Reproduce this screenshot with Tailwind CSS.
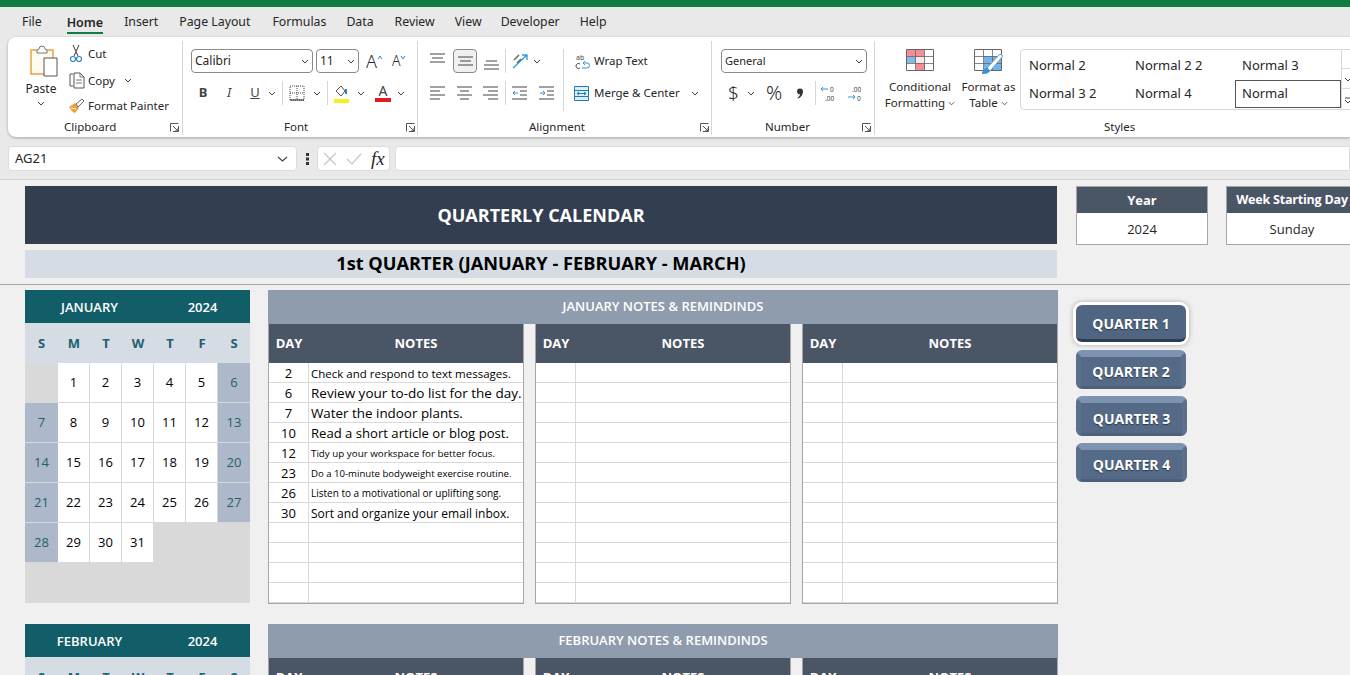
<!DOCTYPE html>
<html lang="en">
<head>
<meta charset="UTF-8">
<title>Quarterly Calendar</title>
<script src="https://cdn.jsdelivr.net/npm/@tailwindcss/browser@4"></script>
</head>
<body class="w-[1350px] h-[675px] overflow-hidden bg-[#f0f0f0] font-['Noto_Sans','Open_Sans',sans-serif] text-[#262626]">

<!-- title strip and tabs -->
<div class="h-[7px] bg-[#107c41]"></div>
<div class="h-[30px] bg-[#e9e9e9] flex items-center text-[12.3px] pl-[22px] pt-[1px]">
  <span>File</span>
  <span class="ml-[25px] font-semibold text-[12.5px] border-b-2 border-[#107c41] h-[22px] leading-[22px]">Home</span>
  <span class="ml-[21px]">Insert</span>
  <span class="ml-[21px]">Page Layout</span>
  <span class="ml-[22px]">Formulas</span>
  <span class="ml-[20px]">Data</span>
  <span class="ml-[21px]">Review</span>
  <span class="ml-[20px]">View</span>
  <span class="ml-[19px]">Developer</span>
  <span class="ml-[20px]">Help</span>
</div>

<!-- ribbon -->
<div class="bg-[#e9e9e9] h-[109px] pl-[8px]">
<div class="h-[100px] bg-white rounded-l-[8px] shadow-[0_1px_3px_rgba(0,0,0,0.3)] flex text-[11.5px] overflow-hidden">

  <!-- clipboard -->
  <div class="w-[175px] shrink-0 flex flex-col border-r border-[#d6d6d6] mt-[4px] mb-[2px]">
    <div class="h-[78px] shrink-0 flex">
      <div class="w-[60px] flex flex-col items-center pl-[6px] pt-[4px]">
        <svg class="ml-[6px]" width="30" height="32" viewBox="0 0 30 32"><path d="M2 5h22v24H2z" fill="#fffaf0" stroke="#e8a33d" stroke-width="1.5"/><path d="M8 5l2-1a3 3 0 0 1 6 0l2 1v3H8z" fill="#fff" stroke="#777"/><path d="M15 13h13v18H15z" fill="#fff" stroke="#555"/></svg>
        <span class="mt-[4px] leading-[16px] text-[12px]">Paste</span>
        <svg class="mt-[4px]" width="8" height="5" viewBox="0 0 8 5"><path d="M1 1l3 3 3-3" fill="none" stroke="#444"/></svg>
      </div>
      <div class="flex flex-col">
        <div class="flex items-center h-[26px]"><svg class="mr-[4px]" width="16" height="20" viewBox="0 0 16 20"><path d="M5 1l5 11M11 1L6 12" fill="none" stroke="#555" stroke-width="1.1"/><circle cx="5" cy="15" r="2.5" fill="none" stroke="#2e86c1" stroke-width="1.2"/><circle cx="11" cy="15" r="2.5" fill="none" stroke="#2e86c1" stroke-width="1.2"/></svg>Cut</div>
        <div class="flex items-center h-[26px] pt-[1px]"><svg class="mr-[1px]" width="19" height="17" viewBox="0 0 19 17"><path d="M5 2H2v12h3" fill="none" stroke="#555"/><path d="M6 1h6l4 4v11H6z" fill="#fff" stroke="#555"/><path d="M8 8h6M8 11h6M12 1v4h4" fill="none" stroke="#555" stroke-width=".8"/></svg>Copy<svg class="ml-[9px]" width="8" height="5" viewBox="0 0 8 5"><path d="M1 1l3 3 3-3" fill="none" stroke="#444"/></svg></div>
        <div class="flex items-center h-[26px]"><svg class="mr-[3px]" width="17" height="16" viewBox="0 0 17 16"><path d="M1 9l6-4 4 5-4 5c-2 0-4-3-6-6z" fill="#e8a33d"/><path d="M8 6l2 3 6-6-2-2z" fill="#fff" stroke="#666"/><path d="M3 10l5 1" stroke="#fff"/></svg>Format Painter</div>
      </div>
    </div>
    <div class="h-[16px] flex items-center pl-[56px] pr-[3px] justify-between"><span>Clipboard</span><svg width="9" height="9" viewBox="0 0 9 9"><path d="M.5 8.5v-8h8M8.5 3v5.500H3M3 3l5 5M8 5v3H5" fill="none" stroke="#555"/></svg></div>
  </div>

  <!-- font -->
  <div class="w-[235px] shrink-0 flex flex-col border-r border-[#d6d6d6] mt-[4px] mb-[2px]">
    <div class="h-[78px] shrink-0 pl-[8px] pt-[8px]">
      <div class="flex items-center h-[24px]">
        <div class="w-[122px] h-[24px] border border-[#8a8a8a] rounded-[4px] flex items-center justify-between px-[3px] text-[12px]">Calibri<svg width="8" height="5" viewBox="0 0 8 5"><path d="M1 1l3 3 3-3" fill="none" stroke="#444"/></svg></div>
        <div class="ml-[3px] w-[43px] h-[24px] border border-[#8a8a8a] rounded-[4px] flex items-center justify-between px-[3px] text-[12px]">11<svg width="8" height="5" viewBox="0 0 8 5"><path d="M1 1l3 3 3-3" fill="none" stroke="#444"/></svg></div>
        <span class="ml-[7px] text-[18px] font-light leading-none">A</span><svg class="mb-[8px]" width="6" height="5" viewBox="0 0 6 5"><path d="M1 4l2-3 2 3" fill="none" stroke="#2e86c1"/></svg>
        <span class="ml-[9px] text-[14px] font-light leading-none">A</span><svg class="mb-[8px]" width="6" height="5" viewBox="0 0 6 5"><path d="M1 1l2 3 2-3" fill="none" stroke="#2e86c1"/></svg>
      </div>
      <div class="flex items-center h-[24px] mt-[8px] text-[#444]">
        <span class="ml-[7px] w-[10px] font-bold text-[13px] text-center">B</span>
        <span class="ml-[16px] w-[10px] italic text-[13px] text-center">I</span>
        <span class="ml-[16px] w-[10px] underline text-[13px] text-center">U</span>
        <svg class="ml-[8px]" width="8" height="5" viewBox="0 0 8 5"><path d="M1 1l3 3 3-3" fill="none" stroke="#444"/></svg>
        <div class="ml-[6px] w-px h-[24px] bg-[#d6d6d6]"></div>
        <svg class="ml-[6px]" width="16" height="16" viewBox="0 0 16 16"><path d="M1 1h14v14H1zM8 1v14M1 8h14" fill="none" stroke="#444" stroke-dasharray="1 1"/><path d="M1 15h14" stroke="#222"/></svg>
        <svg class="ml-[8px]" width="8" height="5" viewBox="0 0 8 5"><path d="M1 1l3 3 3-3" fill="none" stroke="#444"/></svg>
        <div class="ml-[6px] w-px h-[24px] bg-[#d6d6d6]"></div>
        <svg class="ml-[5px]" width="17" height="20" viewBox="0 0 17 20"><path d="M3 8l5-5 4 5-4 5z" fill="#fff" stroke="#555"/><path d="M13 6v5" stroke="#2e86c1" stroke-width="2"/><path d="M1 16h15v4H1z" fill="#f7f01e"/></svg>
        <svg class="ml-[7px]" width="8" height="5" viewBox="0 0 8 5"><path d="M1 1l3 3 3-3" fill="none" stroke="#444"/></svg>
        <div class="ml-[10px] w-[16px] flex flex-col items-center leading-[14px] text-[14px]">A<div class="w-[16px] h-[4px] bg-[#e01b24]"></div></div>
        <svg class="ml-[6px]" width="8" height="5" viewBox="0 0 8 5"><path d="M1 1l3 3 3-3" fill="none" stroke="#444"/></svg>
      </div>
    </div>
    <div class="h-[16px] flex items-center justify-between pl-[101px] pr-[2px]"><span>Font</span><svg width="9" height="9" viewBox="0 0 9 9"><path d="M.5 8.5v-8h8M8.5 3v5.500H3M3 3l5 5M8 5v3H5" fill="none" stroke="#555"/></svg></div>
  </div>

  <!-- alignment -->
  <div class="w-[294px] shrink-0 flex flex-col border-r border-[#d6d6d6] mt-[4px] mb-[2px]">
    <div class="h-[78px] shrink-0 pl-[12px] pt-[8px] flex">
      <div class="flex flex-col gap-[8px]">
        <div class="flex items-center h-[24px]">
          <svg class="mb-[6px]" width="15" height="10" viewBox="0 0 15 10"><path d="M0 1h15M2 5h11M0 9h15" stroke="#444"/></svg>
          <div class="ml-[8px] w-[24px] h-[24px] rounded-[4px] border border-[#8a8a8a] bg-[#f0f0f0] flex items-center justify-center"><svg width="15" height="10" viewBox="0 0 15 10"><path d="M0 1h15M2 5h11M0 9h15" stroke="#444"/></svg></div>
          <svg class="ml-[7px] mt-[8px]" width="15" height="10" viewBox="0 0 15 10"><path d="M2 1h11M0 5h15M0 9h15" stroke="#444"/></svg>
          <div class="ml-[6px] w-px h-[24px] bg-[#d6d6d6]"></div>
          <svg class="ml-[6px]" width="17" height="17" viewBox="0 0 17 17"><path d="M1 15L15 2M10 2h5v5" fill="none" stroke="#2e9bd6" stroke-width="1.300"/><path d="M2 7l5-5M5 10l4-4" stroke="#666" stroke-width="1.500"/></svg>
          <svg class="ml-[4px]" width="8" height="5" viewBox="0 0 8 5"><path d="M1 1l3 3 3-3" fill="none" stroke="#444"/></svg>
        </div>
        <div class="flex items-center h-[24px]">
          <svg width="15" height="14" viewBox="0 0 15 14"><path d="M0 1h15M0 5h10M0 9h15M0 13h10" stroke="#444"/></svg>
          <svg class="ml-[12px]" width="15" height="14" viewBox="0 0 15 14"><path d="M0 1h15M3 5h9M0 9h15M3 13h9" stroke="#444"/></svg>
          <svg class="ml-[11px]" width="15" height="14" viewBox="0 0 15 14"><path d="M0 1h15M5 5h10M0 9h15M5 13h10" stroke="#444"/></svg>
          <div class="ml-[7px] w-px h-[24px] bg-[#d6d6d6]"></div>
          <svg class="ml-[6px]" width="15" height="14" viewBox="0 0 15 14"><path d="M0 1h15M8 5h7M8 9h7M0 13h15" stroke="#444"/><path d="M6 7H1M3 5L1 7l2 2" fill="none" stroke="#2e9bd6"/></svg>
          <svg class="ml-[12px]" width="15" height="14" viewBox="0 0 15 14"><path d="M0 1h15M8 5h7M8 9h7M0 13h15" stroke="#444"/><path d="M1 7h5M4 5l2 2-2 2" fill="none" stroke="#2e9bd6"/></svg>
        </div>
      </div>
      <div class="ml-[9px] w-px h-[62px] bg-[#d6d6d6]"></div>
      <div class="flex flex-col gap-[8px] ml-[10px]">
        <div class="flex items-center h-[24px] pl-[1px]"><svg class="mr-[3px]" width="16" height="18" viewBox="0 0 16 18"><text x="1" y="8" font-size="7" fill="#444">ab</text><path d="M1 14a2.500 2.500 0 0 1 4-2M1 14a2.500 2.500 0 0 0 4 2" fill="none" stroke="#444"/><path d="M7 16h5a2.500 2.500 0 0 0 0-5H8M10 9l-2 2 2 2" fill="none" stroke="#2e9bd6"/></svg>Wrap Text</div>
        <div class="flex items-center h-[24px]"><svg class="mr-[5px]" width="15" height="15" viewBox="0 0 15 15"><path d="M.5.500h14v14H.5zM.5 4.500h14M.5 10.500h14" fill="#dceefa" stroke="#1e7ab8"/><path d="M3 7.500h9M5 6L3 7.500 5 9M10 6l2 1.500L10 9" fill="none" stroke="#1e7ab8"/></svg>Merge &amp; Center<svg class="ml-[11px]" width="8" height="5" viewBox="0 0 8 5"><path d="M1 1l3 3 3-3" fill="none" stroke="#444"/></svg></div>
      </div>
    </div>
    <div class="h-[16px] flex items-center justify-between pl-[111px] pr-[2px]"><span>Alignment</span><svg width="9" height="9" viewBox="0 0 9 9"><path d="M.5 8.5v-8h8M8.5 3v5.500H3M3 3l5 5M8 5v3H5" fill="none" stroke="#555"/></svg></div>
  </div>

  <!-- number -->
  <div class="w-[163px] shrink-0 flex flex-col border-r border-[#d6d6d6] mt-[4px] mb-[2px]">
    <div class="h-[78px] shrink-0 pl-[9px] pt-[8px]">
      <div class="w-[146px] h-[24px] border border-[#8a8a8a] rounded-[4px] flex items-center justify-between px-[3px] text-[11px]">General<svg width="8" height="5" viewBox="0 0 8 5"><path d="M1 1l3 3 3-3" fill="none" stroke="#444"/></svg></div>
      <div class="flex items-center h-[24px] mt-[8px]">
        <span class="ml-[7px] w-[10px] text-[19px] font-light text-center leading-none">$</span>
        <svg class="ml-[9px]" width="8" height="5" viewBox="0 0 8 5"><path d="M1 1l3 3 3-3" fill="none" stroke="#444"/></svg>
        <span class="ml-[8px] w-[22px] text-[20px] font-light text-center leading-none">%</span>
        <svg class="ml-[11px]" width="8" height="11" viewBox="0 0 8 11"><path d="M1 3.500a3 3 0 1 1 6 0c0 3-2 6-5 7l-.5-.7c1.500-1 2.500-2.200 2.600-3.500A3 3 0 0 1 1 3.500z" fill="#333"/></svg>
        <div class="ml-[11px] w-px h-[24px] bg-[#d6d6d6]"></div>
        <svg class="ml-[4px]" width="18" height="18" viewBox="0 0 18 18"><path d="M8 5H1M3 3L1 5l2 2" fill="none" stroke="#2e9bd6"/><text x="10" y="7.500" font-size="6.500" fill="#444">0</text><text x="5" y="17" font-size="6.500" fill="#444">.00</text></svg>
        <svg class="ml-[9px]" width="18" height="18" viewBox="0 0 18 18"><text x="5" y="7.500" font-size="6.500" fill="#444">.00</text><path d="M1 13h7M6 11l2 2-2 2" fill="none" stroke="#2e9bd6"/><text x="10" y="17" font-size="6.500" fill="#444">0</text></svg>
      </div>
    </div>
    <div class="h-[16px] flex items-center justify-between pl-[53px] pr-[3px]"><span>Number</span><svg width="9" height="9" viewBox="0 0 9 9"><path d="M.5 8.5v-8h8M8.5 3v5.500H3M3 3l5 5M8 5v3H5" fill="none" stroke="#555"/></svg></div>
  </div>

  <!-- styles -->
  <div class="flex-1 flex flex-col mt-[4px] mb-[2px]">
    <div class="h-[78px] shrink-0 flex">
      <div class="w-[88px] shrink-0 flex flex-col items-center pt-[8px] pl-[2px] leading-[16px] text-center">
        <svg width="28" height="22" viewBox="0 0 28 22"><path d="M.5.500h27v21H.5z" fill="#fff" stroke="#666"/><path d="M1 1h17v7H1zM10 14h9v7h-9z" fill="#f58d97"/><path d="M1 8h9v6H1z" fill="#84b8e8"/><path d="M10 8h8v6h-8z" fill="#f8e6e6"/><path d="M9.500 0v22M18.500 0v22M0 7.500h28M0 14.500h28" stroke="#666" stroke-width=".8"/></svg>
        <span class="mt-[8px]">Conditional</span>
        <span class="flex items-center">Formatting<svg class="ml-[3px]" width="7" height="5" viewBox="0 0 8 5"><path d="M1 1l3 3 3-3" fill="none" stroke="#444"/></svg></span>
      </div>
      <div class="w-[51px] shrink-0 flex flex-col items-center pt-[8px] leading-[16px] text-center">
        <svg width="30" height="26" viewBox="0 0 30 26"><path d="M.5.500h27v21H.5z" fill="#fff" stroke="#666"/><path d="M10 7h17v14H10z" fill="#72b4ea"/><path d="M9.500 0v22M18.500 0v22M0 7.500h28M0 14.500h28" stroke="#666" stroke-width=".8"/><path d="M12 20L26 5l3 2-13 15z" fill="#fff" stroke="#6b9bc3"/><path d="M8 25c0-4 3-6 6-6l2 3c-2 3-5 3-8 3z" fill="#3e90d4"/></svg>
        <span class="mt-[4px] whitespace-nowrap">Format as</span>
        <span class="flex items-center">Table<svg class="ml-[3px]" width="7" height="5" viewBox="0 0 8 5"><path d="M1 1l3 3 3-3" fill="none" stroke="#444"/></svg></span>
      </div>
      <div class="ml-[6px] mt-[8px] w-[322px] h-[61px] shrink-0 border border-[#d6d6d6] rounded-l-[4px] grid grid-cols-[107px_107px_106px] grid-rows-[30px_28px] text-[13px]">
        <span class="pl-[8px] pt-[2px] flex items-center">Normal 2</span>
        <span class="pl-[7px] pt-[2px] flex items-center">Normal 2 2</span>
        <span class="pl-[7px] pt-[2px] flex items-center">Normal 3</span>
        <span class="pl-[8px] flex items-center">Normal 3 2</span>
        <span class="pl-[7px] flex items-center">Normal 4</span>
        <span class="pl-[6px] flex items-center border border-[#555] bg-white">Normal</span>
      </div>
      <div class="mt-[8px] w-[8px] h-[61px] border-y border-[#d6d6d6] flex flex-col justify-between overflow-hidden">
        <div class="h-[19px] border-b border-[#d6d6d6]"></div>
        <div class="h-[19px] border-b border-[#d6d6d6] pt-[7px]"><svg width="8" height="5" viewBox="0 0 8 5"><path d="M3 1l3 3 3-3" fill="none" stroke="#444"/></svg></div>
        <div class="h-[19px] pt-[7px]"><svg width="8" height="6" viewBox="0 0 8 6"><path d="M3 1h7M3 3l3 3 3-3" fill="none" stroke="#444"/></svg></div>
      </div>
    </div>
    <div class="h-[16px] flex items-center pl-[229px]">Styles</div>
  </div>
</div>
</div>

<!-- formula bar -->
<div class="h-[34px] bg-[#e9e9e9] border-b border-[#d4d4d4] pl-[8px] flex text-[12px]">
  <div class="w-[289px] h-[25px] bg-white border border-[#dcdcdc] rounded-[4px] flex items-center justify-between pl-[6px] pr-[8px] text-[13px]">AG21<svg width="11" height="6" viewBox="0 0 11 6"><path d="M1 1l4.500 4L10 1" fill="none" stroke="#444" stroke-width="1.200"/></svg></div>
  <div class="w-[20px] h-[25px] flex items-center justify-center"><svg width="3" height="12" viewBox="0 0 3 12"><path d="M0 0h3v3H0zM0 4.500h3v3H0zM0 9h3v3H0z" fill="#333"/></svg></div>
  <div class="w-[73px] h-[25px] bg-white border border-[#dcdcdc] rounded-[4px] flex items-center pl-[5px]">
    <svg width="14" height="14" viewBox="0 0 14 14"><path d="M1 1l12 12M13 1L1 13" stroke="#c4c4c4" stroke-width="1.200"/></svg>
    <svg class="ml-[9px]" width="16" height="12" viewBox="0 0 16 12"><path d="M1 6l5 5L15 1" fill="none" stroke="#c4c4c4" stroke-width="1.200"/></svg>
    <span class="ml-[9px] font-['Liberation_Serif',serif] italic text-[19px] leading-none">fx</span>
  </div>
  <div class="ml-[5px] flex-1 h-[25px] bg-white border border-[#dcdcdc] rounded-l-[4px]"></div>
</div>

<!-- sheet -->
<div class="font-['Open_Sans',sans-serif] text-[13px]">
  <div class="h-[105px] border-b border-[#a6a6a6] pl-[25px] pt-[6px] flex">
    <div class="w-[1032px] shrink-0">
      <div class="h-[58px] bg-[#333f50] text-white font-bold text-[18px] flex items-center justify-center">QUARTERLY CALENDAR</div>
      <div class="mt-[6px] h-[28px] bg-[#d6dce4] text-black font-bold text-[18.200px] flex items-center justify-center">1st QUARTER (JANUARY - FEBRUARY - MARCH)</div>
    </div>
    <div class="ml-[19px] w-[132px] h-[59px] shrink-0 border border-[#a6a6a6] bg-white flex flex-col">
      <div class="h-[26px] pt-[1px] bg-[#4a5565] text-white font-bold flex items-center justify-center">Year</div>
      <div class="flex-1 pt-[2px] flex items-center justify-center">2024</div>
    </div>
    <div class="ml-[18px] w-[132px] h-[59px] shrink-0 border border-[#a6a6a6] bg-white flex flex-col">
      <div class="h-[26px] pt-[1px] bg-[#4a5565] text-white font-bold text-[12.500px] tracking-[-0.2px] flex items-center justify-center whitespace-nowrap">Week Starting Day</div>
      <div class="flex-1 pt-[2px] flex items-center justify-center">Sunday</div>
    </div>
  </div>

  <div class="pl-[25px] pt-[5px] flex">
    <div class="w-[225px] shrink-0">
      <div id="jan"></div>
    </div>
    <div class="ml-[18px] w-[790px] shrink-0">
      <div class="h-[34px] bg-[#8f9cad] text-white font-semibold flex items-center justify-center">JANUARY NOTES &amp; REMINDINDS</div>
      <div class="flex gap-[11px]" id="jan-notes"></div>
    </div>
    <div class="ml-[18px] flex flex-col pt-[15px] font-bold text-[14px] text-white [text-shadow:0_1px_1px_rgba(0,0,0,0.5)]">
      <div class="w-[110px] h-[37px] pt-[2px] rounded-[6px] bg-[#4f6582] border-b-[3px] border-[#2c3c52] flex items-center justify-center shadow-[0_0_0_3px_#fff,0_0_5px_3px_rgba(0,0,0,0.3)]">QUARTER 1</div>
      <div class="mt-[8px] w-[110px] h-[39px] rounded-[6px] bg-[#546a87] border-t-[7px] border-x-[5px] border-b-[3px] border-t-[#7d93af] border-x-[#5a708d] border-b-[#4c607b] flex items-center justify-center">QUARTER 2</div>
      <div class="mt-[7px] w-[111px] h-[40px] rounded-[6px] bg-[#546a87] border-t-[7px] border-x-[5px] border-b-[3px] border-t-[#7d93af] border-x-[#5a708d] border-b-[#4c607b] flex items-center justify-center">QUARTER 3</div>
      <div class="mt-[7px] w-[111px] h-[39px] rounded-[6px] bg-[#546a87] border-t-[7px] border-x-[5px] border-b-[3px] border-t-[#7d93af] border-x-[#5a708d] border-b-[#4c607b] flex items-center justify-center">QUARTER 4</div>
    </div>
  </div>

  <div class="pl-[25px] pt-[20px] flex">
    <div class="w-[225px] shrink-0"><div id="feb"></div></div>
    <div class="ml-[18px] w-[790px] shrink-0">
      <div class="h-[34px] bg-[#8f9cad] text-white font-semibold flex items-center justify-center">FEBRUARY NOTES &amp; REMINDINDS</div>
      <div class="flex gap-[11px]" id="feb-notes"></div>
    </div>
  </div>
</div>

<script>
  const DOW = ['S','M','T','W','T','F','S'];

  function calendar(name, offset, days) {
    let html = '<div class="h-[33px] pt-[2px] bg-[#125e68] text-white font-semibold flex items-center text-[13px]"><span class="w-[129px] text-center">' + name + '</span><span class="w-[96px] text-center pl-[1px]">2024</span></div>';
    html += '<div class="grid grid-cols-[33px_repeat(6,32px)] w-[225px] h-[40px] pt-[1px] bg-[#d6dce4] text-[#1f5f6f] font-bold items-center text-center">';
    DOW.forEach(d => { html += '<span>' + d + '</span>'; });
    html += '</div><div class="grid grid-cols-[33px_repeat(6,32px)] grid-rows-[repeat(6,40px)] w-[225px] bg-[#d9d9d9]">';
    for (let i = 0; i < 42; i++) {
      const day = i - offset + 1;
      if (day < 1 || day > days) { html += '<div></div>'; continue; }
      const weekend = i % 7 === 0 || i % 7 === 6;
      html += weekend
        ? '<div class="bg-[#adb9ca] text-[#1f5f6f] border-b border-[#d9d9d9] pt-[1px] flex items-center justify-center">' + day + '</div>'
        : '<div class="bg-white text-black border-r border-b border-[#d9d9d9] pt-[1px] flex items-center justify-center">' + day + '</div>';
    }
    return html + '</div>';
  }

  const JAN = [
    ['2', 'Check and respond to text messages.', 'text-[11.500px]'],
    ['6', 'Review your to-do list for the day.', 'text-[13.500px]'],
    ['7', 'Water the indoor plants.', 'text-[13.400px]'],
    ['10', 'Read a short article or blog post.', 'text-[13.100px]'],
    ['12', 'Tidy up your workspace for better focus.', 'text-[9.800px]'],
    ['23', 'Do a 10-minute bodyweight exercise routine.', 'text-[9.600px]'],
    ['26', 'Listen to a motivational or uplifting song.', 'text-[10px]'],
    ['30', 'Sort and organize your email inbox.', 'text-[12px]']
  ];

  function notes(rows) {
    let html = '<div class="w-[256px] shrink-0 border-x border-b border-[#a6a6a6] bg-white"><div class="h-[39px] bg-[#4a5565] text-white font-bold flex items-center"><span class="w-[40px] text-center">DAY</span><span class="flex-1 text-center">NOTES</span></div>';
    for (let i = 0; i < 12; i++) {
      const r = rows[i] || ['', '', ''];
      html += '<div class="h-[20px] flex border-b border-[#d9d9d9] text-black whitespace-nowrap overflow-hidden"><span class="w-[40px] shrink-0 border-r border-[#d9d9d9] text-center leading-[21px]">' + r[0] + '</span><span class="pl-[2px] leading-[21px] ' + r[2] + '">' + r[1] + '</span></div>';
    }
    return html + '</div>';
  }

  document.getElementById('jan').innerHTML = calendar('JANUARY', 1, 31);
  document.getElementById('feb').innerHTML = calendar('FEBRUARY', 4, 29);
  document.getElementById('jan-notes').innerHTML = notes(JAN) + notes([]) + notes([]);
  document.getElementById('feb-notes').innerHTML = notes([]) + notes([]) + notes([]);
</script>
</body>
</html>
